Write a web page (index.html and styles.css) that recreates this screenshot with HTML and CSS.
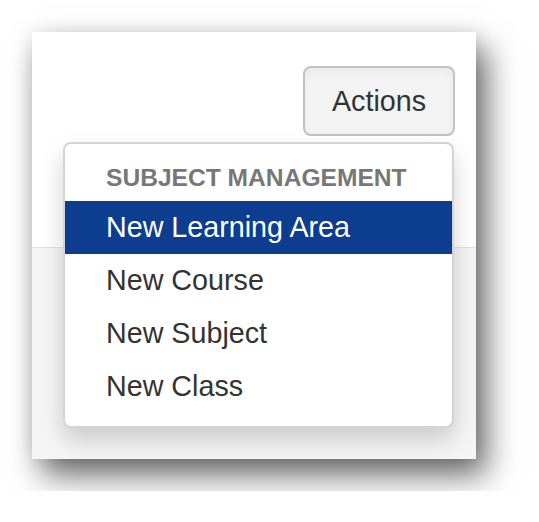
FILE: index.html
```html
<!DOCTYPE html>
<html lang="en">
  <head>
    <meta charset="UTF-8" />
    <meta name="viewport" content="width=device-width, initial-scale=1.0" />
    <title>Actions</title>
    <link rel="stylesheet" href="styles.css">
  </head>
  <body>
    <div class="window">
      <div class="toolbar">
        <div class="btn-group">
          <button type="button" class="btn">Actions</button>
          <ul class="dropdown-menu">
            <li class="dropdown-header">Subject Management</li>
            <li><a href="#" class="active">New Learning Area</a></li>
            <li><a href="#">New Course</a></li>
            <li><a href="#">New Subject</a></li>
            <li><a href="#">New Class</a></li>
          </ul>
        </div>
      </div>
      <div class="footer"></div>
    </div>
  </body>
</html>
```

FILE: styles.css
```css
* {
  box-sizing: border-box;
  margin: 0;
  padding: 0;
}

body {
  font-family: "Liberation Sans", Arial, sans-serif;
  background: white;
  padding: 32px;
}

.window {
  width: 444px;
  height: 427px;
  display: flex;
  flex-direction: column;
  background: white;
  box-shadow: 10px 16px 30px rgba(0, 0, 0, 0.6), 0 0 18px rgba(0, 0, 0, 0.08);
}

.toolbar {
  height: 215px;
  display: flex;
  align-items: flex-start;
  justify-content: flex-end;
  padding: 34px 21px 0 0;
  background: white;
}

.footer {
  flex: 1;
  background: #f5f5f5;
  border-top: 1px solid #e2e2e2;
}

.btn-group {
  position: relative;
}

.btn {
  display: block;
  width: 152px;
  height: 70px;
  font-family: inherit;
  font-size: 28.7px;
  color: #333;
  background: #f3f3f3;
  border: 2px solid #c2c2c2;
  border-radius: 8px;
  box-shadow: inset 0 4px 8px rgba(0, 0, 0, 0.04);
}

.dropdown-menu {
  position: absolute;
  top: 100%;
  right: 1px;
  margin-top: 6px;
  width: 391px;
  list-style: none;
  padding: 10px 0 13px;
  background: white;
  border: 2px solid rgba(0, 0, 0, 0.17);
  border-radius: 8px;
  box-shadow: 0 12px 24px rgba(0, 0, 0, 0.175);
  z-index: 10;
}

.dropdown-header {
  padding: 6px 41px;
  line-height: 35px;
  font-size: 24.6px;
  font-weight: bold;
  text-transform: uppercase;
  color: #777;
}

.dropdown-menu a {
  display: block;
  padding: 6px 41px;
  line-height: 41px;
  font-size: 28.7px;
  color: #333;
  text-decoration: none;
}

.dropdown-menu a.active {
  background: #0c3d8f;
  color: white;
}
```
